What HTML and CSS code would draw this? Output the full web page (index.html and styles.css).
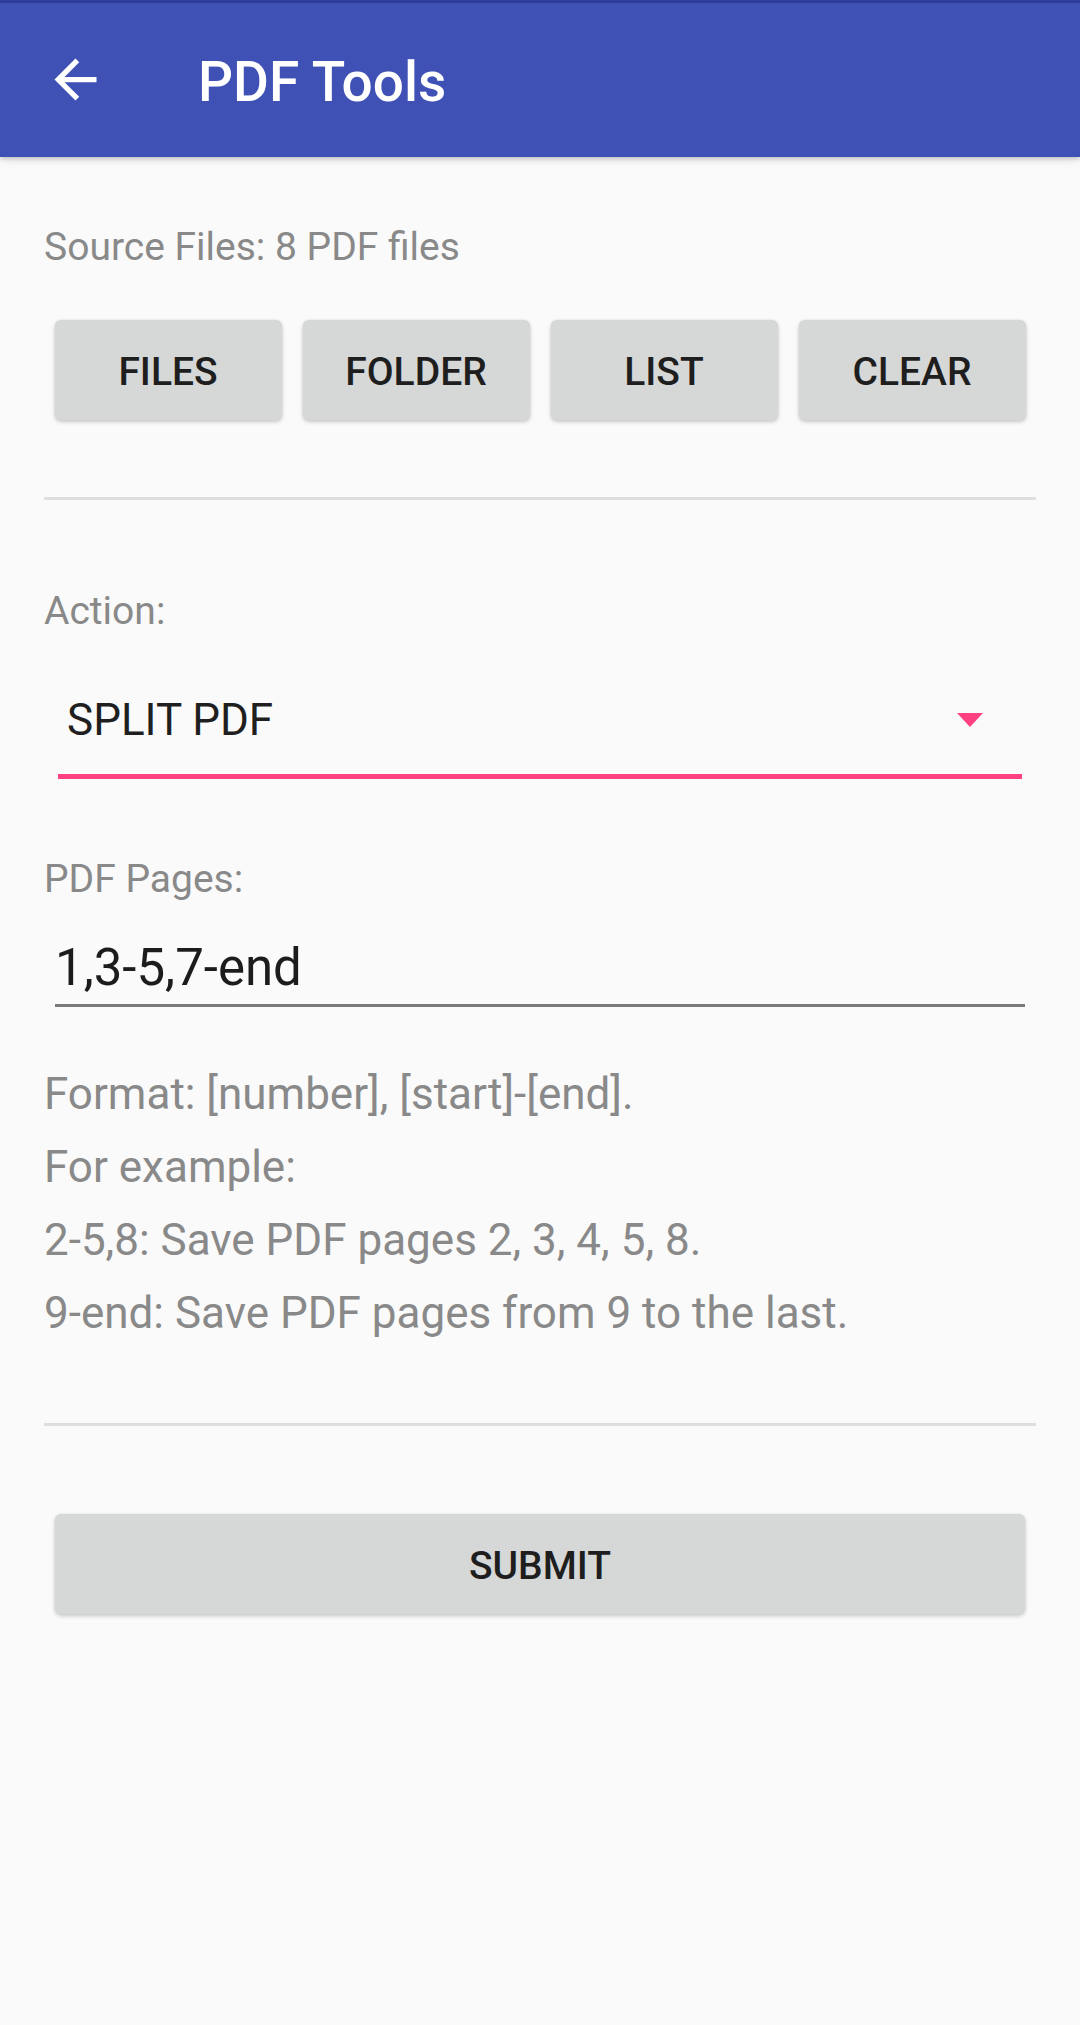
FILE: index.html
```html
<!DOCTYPE html>
<html lang="en">
<head>
<meta charset="utf-8">
<title>PDF Tools</title>
<link rel="stylesheet" href="styles.css">
</head>
<body>
<div class="status-edge"></div>
<header class="appbar">
  <svg class="back" viewBox="0 0 24 24" width="63" height="63" aria-hidden="true">
    <path fill="#ffffff" d="M20 11H7.83l5.59-5.59L12 4l-8 8 8 8 1.41-1.41L7.83 13H20v-2z"/>
  </svg>
  <h1 class="title">PDF Tools</h1>
</header>
<main class="content">
  <p class="label source">Source Files: 8 PDF files</p>
  <div class="btn-row">
    <button class="btn">FILES</button>
    <button class="btn">FOLDER</button>
    <button class="btn">LIST</button>
    <button class="btn">CLEAR</button>
  </div>
  <hr class="divider first">
  <p class="label action">Action:</p>
  <div class="spinner">
    <span class="spinner-text">SPLIT PDF</span>
    <span class="caret"></span>
  </div>
  <p class="label pages">PDF Pages:</p>
  <div class="pages-field"><span class="pages-value">1,3-5,7-end</span></div>
  <div class="help">
    <p>Format: [number], [start]-[end].</p>
    <p>For example:</p>
    <p>2-5,8: Save PDF pages 2, 3, 4, 5, 8.</p>
    <p>9-end: Save PDF pages from 9 to the last.</p>
  </div>
  <hr class="divider second">
  <button class="btn submit">SUBMIT</button>
</main>
</body>
</html>
```

FILE: styles.css
```css
html, body {
  margin: 0;
  padding: 0;
}
body {
  background: #fafafa;
  font-family: Roboto, "Noto Sans", "Liberation Sans", sans-serif;
  width: 1080px;
  min-height: 2025px;
}
.status-edge {
  height: 3px;
  background: #2f3d9c;
}
.appbar {
  height: 154px;
  background: #3f51b5;
  display: flex;
  align-items: center;
  padding-left: 44px;
  box-shadow: 0 2px 4px rgba(0,0,0,0.16), 0 4px 8px rgba(0,0,0,0.08);
  position: relative;
}
.back {
  display: block;
  flex: none;
  margin-top: -2px;
}
.title {
  margin: 3px 0 0 91px;
  font-size: 55px;
  font-weight: 500;
  color: #ffffff;
  line-height: 64px;
}
.content {
  padding: 0 44px;
}
.label {
  margin: 0;
  color: #898989;
  font-size: 39px;
  line-height: 47px;
}
.source {
  line-height: 48px;
  padding-top: 66px;
}
.btn-row {
  display: flex;
  margin-top: 49px;
}
.btn {
  font-family: Roboto, "Noto Sans", "Liberation Sans", sans-serif;
  font-size: 39px;
  font-weight: 500;
  color: #1e1e1e;
  background: #d6d7d7;
  border: none;
  border-radius: 6px;
  height: 100px;
  padding: 3px 0 0;
  box-shadow: 0 2px 4px rgba(0,0,0,0.2), 0 0 2px rgba(0,0,0,0.08);
}
.btn-row .btn {
  flex: 1 1 0;
  margin: 0 10.5px;
}
.divider {
  border: none;
  height: 3px;
  background: #dedede;
  margin: 0;
}
.divider.first {
  margin-top: 77px;
}
.action {
  margin-top: 88px;
}
.spinner {
  display: flex;
  align-items: center;
  margin: 59px 14px 0;
  padding: 0 0 28px 9px;
  border-bottom: 5px solid #ff4081;
}
.spinner-text {
  flex: 1;
  font-size: 44px;
  line-height: 52px;
  color: #1f1f1f;
}
.caret {
  width: 0;
  height: 0;
  border-left: 13px solid transparent;
  border-right: 13px solid transparent;
  border-top: 14px solid #ff4081;
  margin-right: 39px;
}
.pages {
  margin-top: 77px;
}
.pages-field {
  margin: 36px 11px 0;
  padding-bottom: 7px;
  border-bottom: 3px solid #7a7a7a;
}
.pages-value {
  display: block;
  margin-left: 0;
  font-size: 51px;
  line-height: 58px;
  color: #1c1c1c;
}
.help {
  margin-top: 51px;
}
.help p {
  margin: 0;
  font-size: 44px;
  line-height: 73px;
  color: #898989;
}
.divider.second {
  margin-top: 73px;
}
.submit {
  display: block;
  width: calc(100% - 22px);
  margin: 88px 11px 0;
}
```
